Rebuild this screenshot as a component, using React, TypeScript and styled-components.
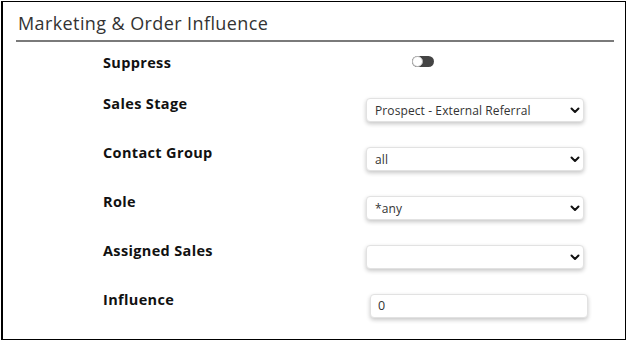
import React from "react";
import styled, { createGlobalStyle } from "styled-components";

const GlobalStyle = createGlobalStyle`
    html, body {
        margin: 0;
        padding: 0;
        background: #fff;
    }
    body {
        font-family: "Open Sans", "Liberation Sans", sans-serif;
        color: #222;
    }
`;

type Field = {
    label: string;
    kind: "toggle" | "select" | "input";
    value?: string;
};

const fields: Field[] = [
    { label: "Suppress", kind: "toggle" },
    { label: "Sales Stage", kind: "select", value: "Prospect - External Referral" },
    { label: "Contact Group", kind: "select", value: "all" },
    { label: "Role", kind: "select", value: "*any" },
    { label: "Assigned Sales", kind: "select", value: "" },
    { label: "Influence", kind: "input", value: "0" },
];

function Chevron() {
    return (
        <svg width="10" height="7" viewBox="0 0 10 7">
            <path d="M1.5 1.5 L5 5 L8.5 1.5" fill="none" stroke="#111" strokeWidth="2" strokeLinecap="round" strokeLinejoin="round" />
        </svg>
    );
}

function Control({ field }: { field: Field }) {
    if (field.kind === "toggle") {
        return (
            <ToggleCell>
                <Toggle>
                    <Knob />
                </Toggle>
            </ToggleCell>
        );
    }
    if (field.kind === "input") {
        return (
            <InputCell>
                <TextBox defaultValue={field.value} />
            </InputCell>
        );
    }
    return (
        <SelectBox>
            <Select defaultValue={field.value}>
                <option value={field.value}>{field.value}</option>
            </Select>
            <Chevron />
        </SelectBox>
    );
}

export default function App() {
    return (
        <>
            <GlobalStyle />
            <Frame>
                <Header>Marketing &amp; Order Influence</Header>
                <Form>
                    {fields.map((f, i) => (
                        <Row key={f.label} first={i === 0}>
                            <Label>{f.label}</Label>
                            <Control field={f} />
                        </Row>
                    ))}
                </Form>
            </Frame>
        </>
    );
}

const Frame = styled.div`
    width: 625px;
    height: 339px;
    margin: 1px 0 0 1px;
    border: 1px solid #000;
    border-left-width: 2px;
    box-sizing: border-box;
    padding: 0 11px 0 13px;
`;

const Header = styled.div`
    height: 40px;
    box-sizing: border-box;
    padding: 11px 0 0 2px;
    font-size: 18px;
    letter-spacing: 0.4px;
    line-height: 20px;
    color: #333;
    border-bottom: 2px solid #7a7a7a;
`;

const Form = styled.div`
    display: flex;
    flex-direction: column;
    padding-left: 87px;
`;

const Row = styled.div<{ first?: boolean }>`
    display: grid;
    grid-template-columns: 263px 221px;
    align-items: start;
    height: ${(p) => (p.first ? "39px" : "49px")};
    padding-top: ${(p) => (p.first ? "14px" : "16px")};
    box-sizing: border-box;
`;

const Label = styled.div`
    font-weight: 700;
    font-size: 14.5px;
    letter-spacing: 0.35px;
    line-height: 16px;
    color: #111;
    margin-top: -1px;
`;

const ToggleCell = styled.div`
    padding-left: 46px;
`;

const Toggle = styled.div`
    width: 22px;
    height: 11px;
    border-radius: 6px;
    background: #444;
    display: flex;
    align-items: center;
`;

const Knob = styled.div`
    width: 11px;
    height: 11px;
    box-sizing: border-box;
    border-radius: 50%;
    background: #fff;
    border: 1px solid #bbb;
`;

const SelectBox = styled.div`
    width: 218px;
    height: 24px;
    margin-top: 1px;
    box-sizing: border-box;
    display: flex;
    align-items: center;
    padding: 0 3px 0 8px;
    border: 1px solid #e2e2e2;
    border-radius: 4px;
    background: #fff;
    box-shadow: 0 2px 4px rgba(0, 0, 0, 0.22);
`;

const Select = styled.select`
    flex: 1;
    appearance: none;
    border: none;
    outline: none;
    background: transparent;
    padding: 0;
    font-family: "Open Sans", "Liberation Sans", sans-serif;
    font-size: 12px;
    letter-spacing: 0.1px;
    color: #333;
`;

const InputCell = styled.div`
    padding-left: 4px;
`;

const TextBox = styled.input`
    width: 218px;
    height: 24px;
    box-sizing: border-box;
    padding: 0 7px;
    border: 1px solid #e2e2e2;
    border-radius: 4px;
    box-shadow: 0 2px 4px rgba(0, 0, 0, 0.22);
    font-family: "Open Sans", "Liberation Sans", sans-serif;
    font-size: 12.5px;
    color: #333;
    outline: none;
`;
